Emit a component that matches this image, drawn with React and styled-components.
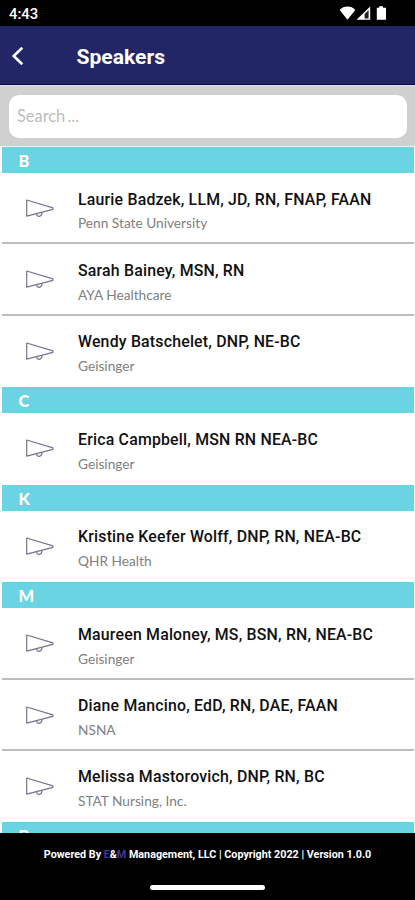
import React from 'react'
import styled, { createGlobalStyle } from 'styled-components'

const COLORS = {
  NAVY: '#222566',
  NAVY_EDGE: '#0a0a4c',
  CYAN: '#6bd4e2',
  GREY: '#d0d0d0',
  DIVIDER: '#bdbdbd',
  WHITE: '#ffffff',
  BLACK: '#000000'
}

const GlobalStyle = createGlobalStyle`
  * {
    box-sizing: border-box;
  }
  body {
    margin: 0;
    background: ${COLORS.WHITE};
  }
`

const Screen = styled.div`
  display: flex;
  flex-direction: column;
  width: 415px;
  height: 900px;
  overflow: hidden;
  font-family: Roboto, sans-serif;
`

const StatusBar = styled.div`
  flex: none;
  display: flex;
  justify-content: space-between;
  height: 25.5px;
  padding: 0 28px 0 9px;
  background: ${COLORS.BLACK};
  color: ${COLORS.WHITE};
  .time {
    font-size: 14.8px;
    font-weight: 500;
    line-height: 28px;
  }
  svg {
    display: block;
    margin-top: 5px;
  }
`

const Header = styled.header`
  flex: none;
  display: flex;
  align-items: center;
  height: 59.5px;
  padding: 2px 0 0 10px;
  background: ${COLORS.NAVY};
  border-bottom: 1.5px solid ${COLORS.NAVY_EDGE};
  svg {
    display: block;
    margin: 1px 50.5px 0 0;
  }
  h1 {
    margin: 2px 0 0;
    color: ${COLORS.WHITE};
    font-size: 21.1px;
    font-weight: 700;
    line-height: 28px;
  }
`

const SearchBar = styled.div`
  flex: none;
  height: 61.95px;
  padding: 9px 8px 0 9px;
  background: ${COLORS.GREY};
  border-top: 1px solid #e4e0e8;
  border-bottom: 1.5px solid #ecf2f3;
  input {
    display: block;
    width: 100%;
    height: 42.5px;
    padding: 0 8px 1px;
    border: 0;
    border-radius: 10px;
    outline: 0;
    background: ${COLORS.WHITE};
    font: 400 16.4px Lato, sans-serif;
    word-spacing: -2px;
  }
  input::placeholder {
    color: #bdbdbd;
    opacity: 1;
  }
`

const List = styled.main`
  flex: 1;
  min-height: 0;
  overflow: hidden;
  padding: 0 1.5px 0 2px;
`

const SectionTitle = styled.div`
  height: 26.2px;
  padding-left: 16.5px;
  background: ${COLORS.CYAN};
  color: ${COLORS.WHITE};
  font: 900 16.4px/27px Lato, sans-serif;
`

const Row = styled.div`
  display: flex;
  height: 71.35px;
  border-bottom: ${p => (p.$last ? '0' : `2px solid ${COLORS.DIVIDER}`)};
  svg {
    flex: none;
    margin: 24px 23px 0 22px;
  }
  .name {
    margin-top: 16.4px;
    color: #111111;
    font-size: 15.86px;
    font-weight: 500;
    line-height: 20px;
    letter-spacing: 0.2px;
    white-space: nowrap;
  }
  .org {
    margin-top: 4.8px;
    color: #808080;
    font: 400 13.7px/18px Lato, sans-serif;
    white-space: nowrap;
  }
`

const Footer = styled.footer`
  flex: none;
  display: flex;
  flex-direction: column;
  align-items: center;
  height: 67px;
  padding-top: 14px;
  background: ${COLORS.BLACK};
  color: ${COLORS.WHITE};
  font-size: 10.75px;
  font-weight: 700;
  line-height: 15px;
  white-space: nowrap;
  .brand {
    color: #3f3a9c;
  }
`

const HomeBar = styled.div`
  width: 115px;
  height: 5px;
  margin-top: 23px;
  border-radius: 2.5px;
  background: ${COLORS.WHITE};
`

const StatusIcons = () => (
  <svg width='48' height='16' viewBox='0 0 48 16'>
    <path d='M0.7 5 C4.5 0.4 12.5 0.4 16.3 5 L8.5 14.8 Z' fill='#fff' />
    <path d='M17.5 14.8 L31.2 1.5 V14.8 Z' fill='#fff' />
    <path d='M25.6 13.4 V9 L29.6 5 V13.4 Z' fill='#222' />
    <path d='M37.8 2.8 H40.2 V1.2 H44 V2.8 H47 V14.8 H37.8 Z' fill='#fff' />
  </svg>
)

const BackIcon = () => (
  <svg width='16' height='20' viewBox='0 0 16 20' fill='none' stroke='#fff' strokeWidth='2.6'>
    <path d='M12.3 1.8 L3.7 10 L12.3 18.2' />
  </svg>
)

const MegaphoneIcon = () => (
  <svg width='31' height='22' viewBox='0 0 31 22' fill='none' stroke='#77748c' strokeWidth='1.2' strokeLinejoin='round'>
    <path d='M2.7 3 L28.9 10.9 V12.3 L2.7 19.2 Z' />
    <path d='M12.6 16.7 C13 20.4 17.4 20.5 18.2 15.4' />
  </svg>
)

const SECTIONS = [
  {
    letter: 'B',
    speakers: [
      { name: 'Laurie Badzek, LLM, JD, RN, FNAP, FAAN', org: 'Penn State University' },
      { name: 'Sarah Bainey, MSN, RN', org: 'AYA Healthcare' },
      { name: 'Wendy Batschelet, DNP, NE-BC', org: 'Geisinger' }
    ]
  },
  {
    letter: 'C',
    speakers: [{ name: 'Erica Campbell, MSN RN NEA-BC', org: 'Geisinger' }]
  },
  {
    letter: 'K',
    speakers: [{ name: 'Kristine Keefer Wolff, DNP, RN, NEA-BC', org: 'QHR Health' }]
  },
  {
    letter: 'M',
    speakers: [
      { name: 'Maureen Maloney, MS, BSN, RN, NEA-BC', org: 'Geisinger' },
      { name: 'Diane Mancino, EdD, RN, DAE, FAAN', org: 'NSNA' },
      { name: 'Melissa Mastorovich, DNP, RN, BC', org: 'STAT Nursing, Inc.' }
    ]
  },
  { letter: 'P', speakers: [] }
]

const Speaker = ({ name, org, last }) => (
  <Row $last={last}>
    <MegaphoneIcon />
    <div>
      <div className='name'>{name}</div>
      <div className='org'>{org}</div>
    </div>
  </Row>
)

const App = () => {
  return (
    <Screen>
      <GlobalStyle />
      <StatusBar>
        <div className='time'>4:43</div>
        <StatusIcons />
      </StatusBar>
      <Header>
        <BackIcon />
        <h1>Speakers</h1>
      </Header>
      <SearchBar>
        <input placeholder='Search ...' />
      </SearchBar>
      <List>
        {SECTIONS.map(({ letter, speakers }) => (
          <section key={letter}>
            <SectionTitle>{letter}</SectionTitle>
            {speakers.map((s, i) => (
              <Speaker key={s.name} {...s} last={i === speakers.length - 1} />
            ))}
          </section>
        ))}
      </List>
      <Footer>
        <div>
          Powered By <span className='brand'>E</span>&amp;<span className='brand'>M</span> Management, LLC | Copyright
          2022 | Version 1.0.0
        </div>
        <HomeBar />
      </Footer>
    </Screen>
  )
}

export default App
